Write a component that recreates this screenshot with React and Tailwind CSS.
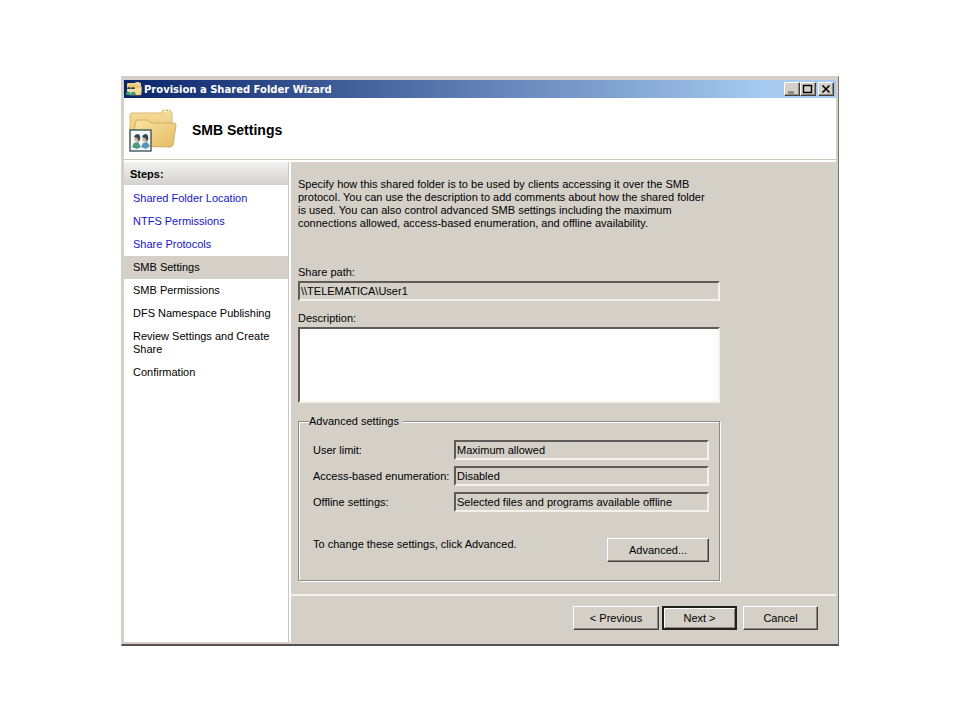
import React, { useState } from 'react';

const steps = [
  { label: 'Shared Folder Location', done: true },
  { label: 'NTFS Permissions', done: true },
  { label: 'Share Protocols', done: true },
  { label: 'SMB Settings', current: true },
  { label: 'SMB Permissions' },
  { label: 'DFS Namespace Publishing' },
  { label: 'Review Settings and Create Share' },
  { label: 'Confirmation' },
];

const settings = [
  { id: 'user-limit', label: 'User limit:', value: 'Maximum allowed' },
  { id: 'enumeration', label: 'Access-based enumeration:', value: 'Disabled' },
  { id: 'offline', label: 'Offline settings:', value: 'Selected files and programs available offline' },
];

const sunken =
  'block w-full border-2 border-t-[#5f5b56] border-l-[#5f5b56] border-b-[#f3f1ec] border-r-[#f3f1ec] pl-px outline-none rounded-none';

const raised =
  'border border-t-white border-l-white border-b-[#45423e] border-r-[#45423e] bg-[#d4d0c8] shadow-[inset_-1px_-1px_0_#8a867e]';

function FolderIcon({ className }) {
  return (
    <svg viewBox="0 0 48 44" className={className} aria-hidden="true">
      <defs>
        <linearGradient id="folderBack" x1="0" y1="0" x2="0" y2="1">
          <stop offset="0" stopColor="#f5dc9a" />
          <stop offset="1" stopColor="#e6c069" />
        </linearGradient>
        <linearGradient id="folderFront" x1="0" y1="0" x2="1" y2="1">
          <stop offset="0" stopColor="#f9e3a4" />
          <stop offset="1" stopColor="#e4bc64" />
        </linearGradient>
      </defs>
      <path d="M1 37V7q0-2 2-2h29l2-3h7l2 3v33z" fill="url(#folderBack)" stroke="#d9b871" strokeWidth="1" />
      <path d="M35 2.5h5" stroke="#fffbe9" strokeWidth="2" />
      <path d="M37 2.5h2" stroke="#8fae7c" strokeWidth="1" />
      <path d="M4 38l2-22q0-4 3-4h10l3 3h23q2 0 2 2l-3 20q-1 2-3 2z" fill="url(#folderFront)" stroke="#d3ab5c" strokeWidth="1" />
      <rect x="1" y="22" width="21" height="21" fill="#f4f7f5" stroke="#3d5a5c" strokeWidth="1.4" />
      <path d="M3 39l2-4 4-1 3 5-4 2z" fill="#4a9a84" />
      <path d="M12 39l2-4 4-1 3 4-4 3z" fill="#5a93c0" />
      <circle cx="8" cy="31" r="2.6" fill="#dcae88" />
      <circle cx="16" cy="31" r="2.6" fill="#dcae88" />
      <path d="M5 29q1-3 4-3 3 1 2 6l-2 2q1-3-1-4zM13 29q1-3 4-3 3 1 2 6l-2 2q1-3-1-4z" fill="#36484c" />
    </svg>
  );
}

function SharedFolderIcon({ className }) {
  return (
    <svg viewBox="0 0 16 16" className={className} aria-hidden="true">
      <path d="M1 13V3q0-1 1-1h7l1-1h3l1 1h1v11z" fill="#efd084" />
      <path d="M3 14l1-9h4l1 1h7l-1 8z" fill="#f6dc92" stroke="#c99a3c" strokeWidth="0.6" />
      <path d="M0 14q0-4 2-4t3 4zM5 14q0-4 2-4t3 4z" fill="#3f9a78" />
      <circle cx="3" cy="9" r="2" fill="#e6e0c0" />
      <circle cx="7" cy="9" r="2" fill="#e6e0c0" />
      <path d="M1 8q0-2 2-2t2 2zM5 8q0-2 2-2t2 2z" fill="#31403a" />
    </svg>
  );
}

function TitleBar() {
  return (
    <div className="flex h-[18px] items-center bg-linear-to-r/srgb from-[#0a246a] to-[#a6caf0] to-90% px-0.5">
      <SharedFolderIcon className="size-4" />
      <h1 className="ml-0.5 flex-1 pt-px font-['DejaVu_Sans',Tahoma,sans-serif] text-[10px] leading-4 font-bold text-white">
        Provision a Shared Folder Wizard
      </h1>
      <div className="flex text-black">
        <button aria-label="Minimize" className={`${raised} flex h-3.5 w-4 items-center justify-center`}>
          <svg viewBox="0 0 12 10" className="h-2.5 w-3"><path d="M2 8.5h6" stroke="#77736c" strokeWidth="2" /></svg>
        </button>
        <button aria-label="Maximize" className={`${raised} flex h-3.5 w-4 items-center justify-center`}>
          <svg viewBox="0 0 12 10" className="h-2.5 w-3"><path d="M1.5 1v7.5h8V1M1 1.5h9" fill="none" stroke="#000" strokeWidth="1.4" /></svg>
        </button>
        <button aria-label="Close" className={`${raised} ml-0.5 flex h-3.5 w-4 items-center justify-center`}>
          <svg viewBox="0 0 12 10" className="h-2.5 w-3"><path d="M2.5 1.5l7 7M9.5 1.5l-7 7" stroke="#000" strokeWidth="1.6" /></svg>
        </button>
      </div>
    </div>
  );
}

function Steps() {
  return (
    <nav className="w-[165px] shrink-0 border-r border-[#c9c6c0] bg-white">
      <h2 className="h-[23px] bg-linear-to-b from-[#f2f1ef] to-[#d3d2cf] pl-1.5 leading-6 font-bold">Steps:</h2>
      <ul className="pt-0.5">
        {steps.map((step) => (
          <li key={step.label} className={step.current ? 'bg-[#d4d0c8]' : ''}>
            <a
              href="#"
              aria-current={step.current ? 'step' : undefined}
              className={`block py-[5px] pr-4 pl-[9px] ${step.done ? 'text-[#1414c8]' : 'text-black'}`}
            >
              {step.label}
            </a>
          </li>
        ))}
      </ul>
    </nav>
  );
}

export default function App() {
  const [description, setDescription] = useState('');

  return (
    <div className="min-h-screen bg-white px-[121px] pt-[76px] pb-16 font-['Liberation_Sans',Arial,sans-serif] text-[11px] leading-[13px] text-black">
      <div className="border border-t-[#d4d0c8] border-l-[#d4d0c8] border-r-[#77746e] border-b-2 border-b-[#55534f] bg-[#d4d0c8] px-0.5 pt-[3px] pb-0.5">
        <TitleBar />
        <header className="flex h-[62px] items-center gap-[15px] border-b border-[#c9c6c0] bg-white pt-0.5 pl-[5px]">
          <FolderIcon className="h-11 w-12" />
          <h2 className="text-[14px] leading-4 font-bold">SMB Settings</h2>
        </header>

        <div className="flex border-t-2 border-white">
          <Steps />
          <div className="min-w-0 flex-1 border-l-2 border-white">
            <main className="max-w-[429px] pt-4 pb-[13px] pl-[7px]">
              <p>
                Specify how this shared folder is to be used by clients accessing it over the SMB
                <br />
                protocol. You can use the description to add comments about how the shared folder
                <br />
                is used. You can also control advanced SMB settings including the maximum
                <br />
                connections allowed, access-based enumeration, and offline availability.
              </p>

              <label htmlFor="share-path" className="mt-9 block">Share path:</label>
              <input id="share-path" readOnly value="\\TELEMATICA\User1" className={`${sunken} mt-0.5 h-5 bg-[#d4d0c8]`} />

              <label htmlFor="description" className="mt-[11px] block">Description:</label>
              <textarea
                id="description"
                value={description}
                onChange={(e) => setDescription(e.target.value)}
                className={`${sunken} mt-0.5 h-[76px] resize-none bg-white`}
              />

              <fieldset className="mt-3 border border-[#8f8b84] px-2.5 pb-[18px] shadow-[1px_1px_0_#fff,inset_1px_1px_0_#fff]">
                <legend className="bg-[#d4d0c8] pr-1">Advanced settings</legend>
                <div className="grid grid-cols-[141px_1fr] items-center gap-y-1.5 pt-3 pl-1">
                  {settings.map((s) => (
                    <React.Fragment key={s.id}>
                      <label htmlFor={s.id}>{s.label}</label>
                      <input id={s.id} readOnly value={s.value} className={`${sunken} h-5 bg-[#d4d0c8]`} />
                    </React.Fragment>
                  ))}
                </div>
                <div className="mt-[26px] flex justify-between pl-1">
                  <p>To change these settings, click Advanced.</p>
                  <button className={`${raised} h-6 w-[102px]`}>Advanced...</button>
                </div>
              </fieldset>
            </main>

            <footer className="flex justify-end border-t-2 border-[#f3f1ec] pt-2.5 pr-[18px] pb-3">
              <button className={`${raised} h-6 w-[86px]`}>&lt; Previous</button>
              <button className="ml-[3px] h-6 w-[75px] border-2 border-[#22201e] bg-[#d4d0c8] shadow-[inset_1px_1px_0_#fff,inset_-1px_-1px_0_#8a867e]">
                Next &gt;
              </button>
              <button className={`${raised} ml-1.5 h-6 w-[75px]`}>Cancel</button>
            </footer>
          </div>
        </div>
      </div>
    </div>
  );
}
